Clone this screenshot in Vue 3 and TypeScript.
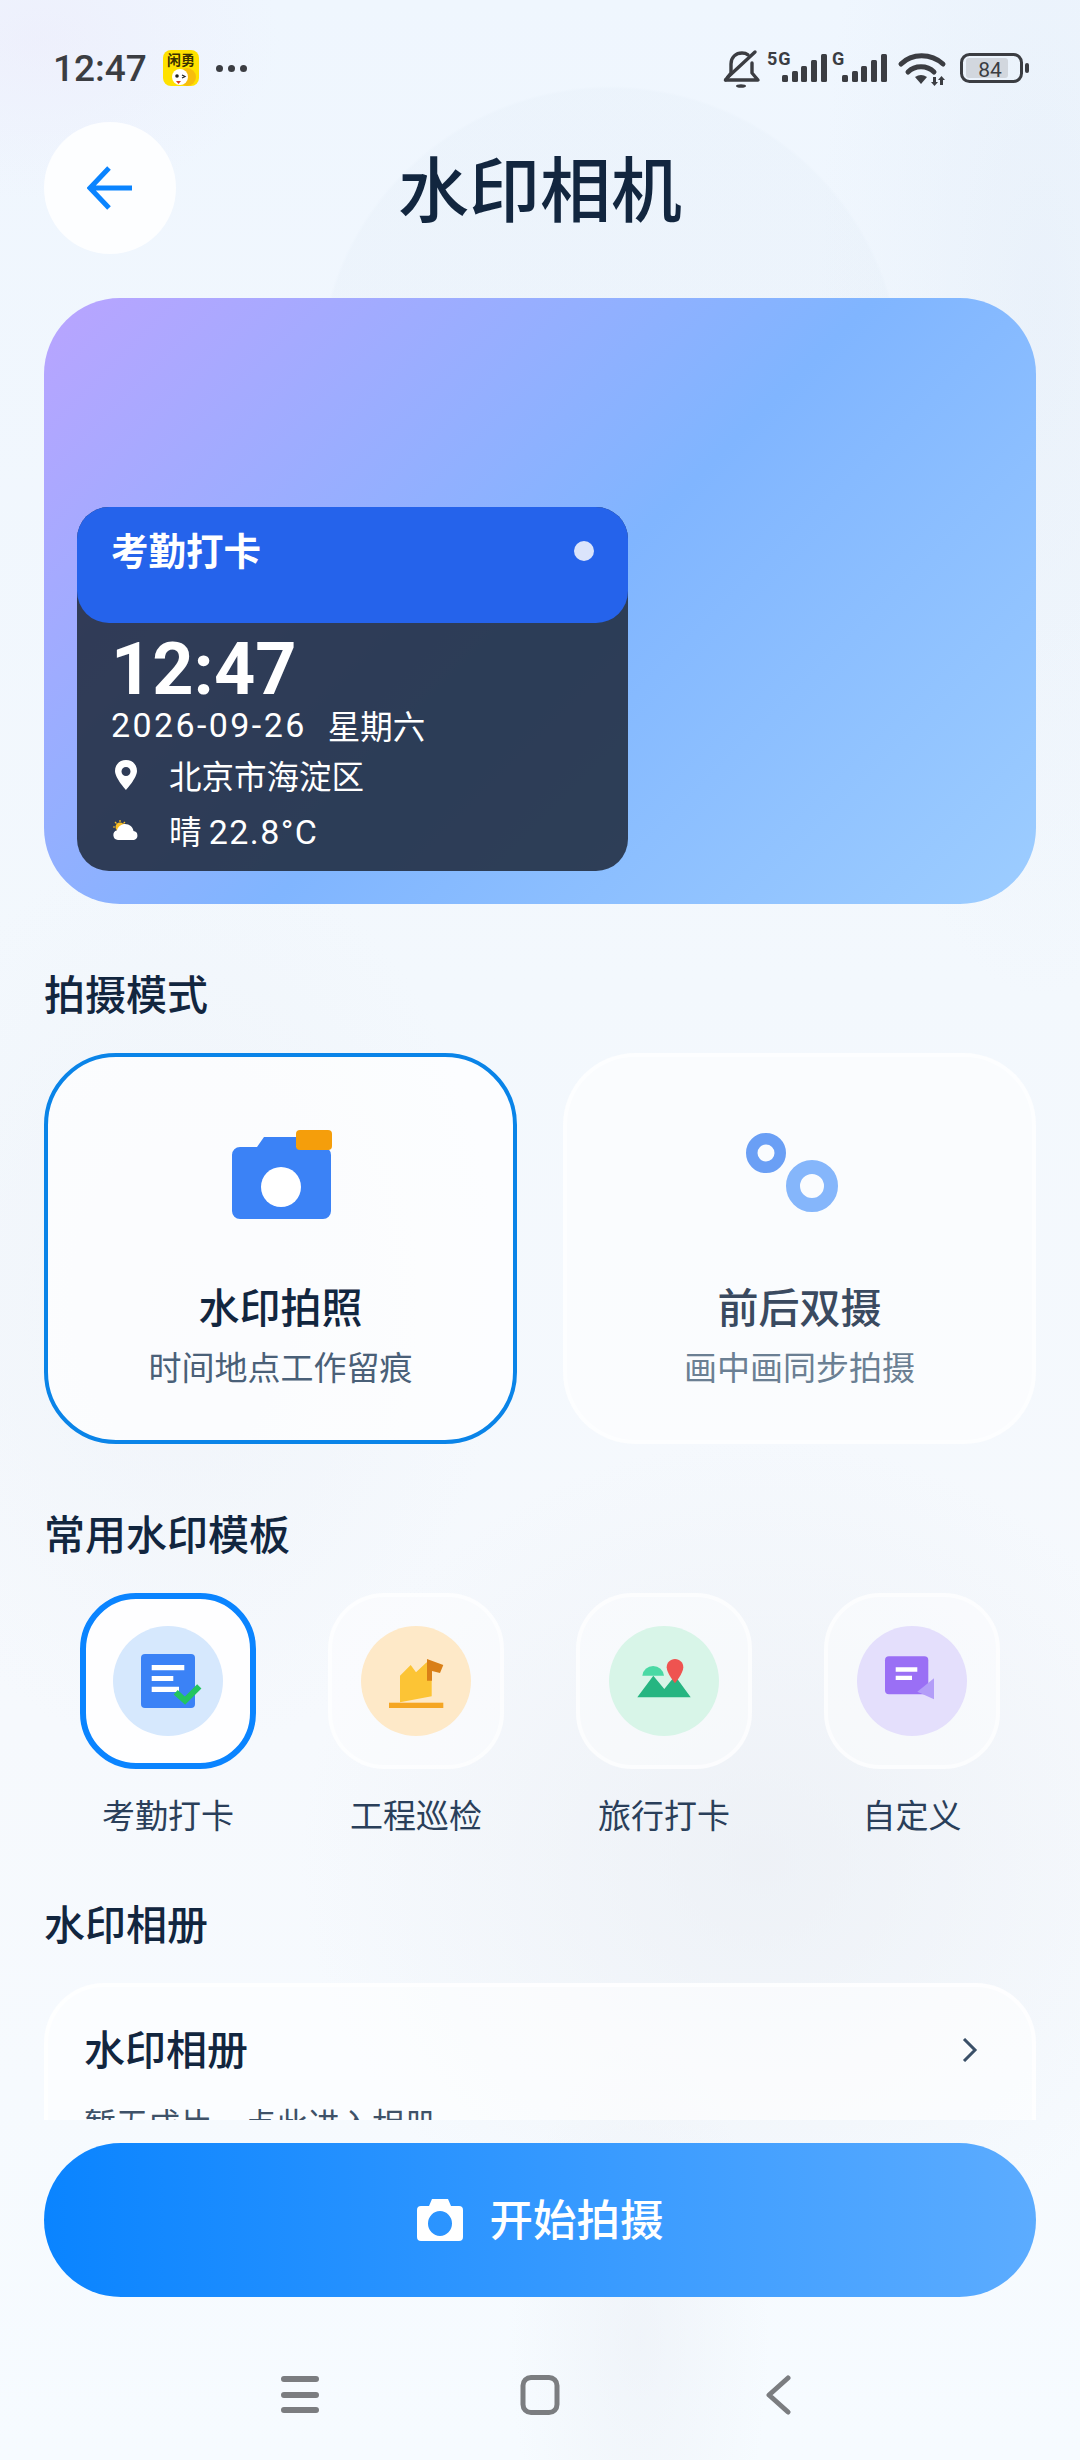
<template>
  <div class="page">
    <div class="status">
      <div class="status-left">
        <span class="clock">12:47</span>
        <svg class="app-icon" width="36" height="36" viewBox="0 0 36 36">
          <rect width="36" height="36" rx="8" fill="#ffe100" />
          <text x="18" y="15" text-anchor="middle" class="app-icon-text">闲勇</text>
          <circle cx="24" cy="27" r="9" fill="#f7bd0c" />
          <circle cx="17" cy="27" r="8" fill="#fff" />
          <circle cx="14" cy="26" r="1.8" fill="#222" />
          <path d="M19 25l3 1.5-3 1.5" fill="none" stroke="#222" stroke-width="1.2" />
          <path d="M13 31h5l-2.5 3z" fill="#d9381e" />
        </svg>
        <span class="dots"><i></i><i></i><i></i></span>
      </div>
      <svg class="status-right" width="310" height="40" viewBox="0 0 310 40" fill="#3b3d42">
        <g fill="none" stroke="#3b3d42" stroke-width="3.4" stroke-linecap="round" stroke-linejoin="round">
          <path d="M3.5 30L9 23V14C9 7 14 3 20 3c2.500 0 4.500 .6 6 1.800" />
          <path d="M30 13V23L36 30H3.500" />
          <path d="M6 27L33 2" />
        </g>
        <ellipse cx="19" cy="36" rx="5" ry="1.800" />
        <text x="45" y="15" class="net">5G</text>
        <rect v-for="b in signalBars" :key="'a' + b.x" :x="b.x" :y="b.y" width="6" :height="32 - b.y" rx="1.500" />
        <text x="110" y="15" class="net">G</text>
        <rect v-for="b in signalBars" :key="'b' + b.x" :x="b.x + 60" :y="b.y" width="6" :height="32 - b.y" rx="1.500" />
        <g fill="none" stroke="#3b3d42" stroke-width="5" stroke-linecap="round">
          <path d="M179 14C190 3 209 3 221 14" />
          <path d="M186 22C193 15 205 15 212 22" />
        </g>
        <path d="M193 27Q199 23 205 27L199 34Z" />
        <path d="M211 27h3v5h2l-3.500 4-3.500-4h2zM218 35h3v-5h2l-3.500-4-3.500 4h2z" />
        <rect x="239.500" y="4.500" width="60" height="27" rx="8" fill="none" stroke="#3b3d42" stroke-width="3" />
        <rect x="244" y="8" width="42" height="20" rx="3" fill="#d2d7de" />
        <text x="268" y="26.500" text-anchor="middle" class="batt">84</text>
        <rect x="303" y="13" width="4" height="10" rx="2" />
      </svg>
    </div>

    <header class="topbar">
      <button class="back" type="button">
        <svg width="46" height="44" viewBox="0 0 46 44" fill="none" stroke="#0a84ff" stroke-width="5">
          <path d="M45 22H4M22 2L3 22l19 20" />
        </svg>
      </button>
      <h1 class="title">水印相机</h1>
    </header>

    <main class="scroll">
      <section class="hero">
        <div class="mark">
          <div class="mark-head">
            <span class="mark-name">考勤打卡</span>
            <span class="mark-dot"></span>
          </div>
          <div class="mark-body">
            <div class="mark-time">12:47</div>
            <div class="mark-date"><span class="num">2026-09-26</span><span>星期六</span></div>
            <div class="mark-row">
              <svg class="mark-icon" width="24" height="30" viewBox="0 0 24 30">
                <path fill="#fff" fill-rule="evenodd" d="M12 0C5.400 0 1 4.800 1 11c0 7 11 19 11 19s11-12 11-19C23 4.800 18.600 0 12 0zm0 7a4.500 4.500 0 1 1 0 9 4.500 4.500 0 0 1 0-9z" />
              </svg>
              <span>北京市海淀区</span>
            </div>
            <div class="mark-row">
              <svg class="mark-icon" width="28" height="22" viewBox="0 0 28 22">
                <circle cx="8" cy="7" r="4.500" fill="#fbbf24" />
                <path d="M8 0v2M1 7h2M3 2l1.500 1.500M13 2l-1.500 1.500" stroke="#fbbf24" stroke-width="1.200" />
                <path fill="#fff" d="M6 20a5 5 0 0 1-1-9.800C6 6.500 9.500 4 13 4c4.500 0 8 3 8.500 7A4.600 4.600 0 0 1 22 20z" />
              </svg>
              <span>晴 <span class="num">22.8°C</span></span>
            </div>
          </div>
        </div>
      </section>

      <h2 class="section">拍摄模式</h2>
      <div class="modes">
        <div class="mode active">
          <svg class="mode-icon" width="120" height="120" viewBox="0 0 120 120">
            <path fill="#3b82f6" d="M19 27h17l7-10h32v10h27a8 8 0 0 1 8 8v56a8 8 0 0 1-8 8H19a8 8 0 0 1-8-8V35a8 8 0 0 1 8-8z" />
            <circle cx="60" cy="67" r="20" fill="#fff" />
            <rect x="75" y="10" width="36" height="20" rx="4" fill="#f59e0b" />
          </svg>
          <div class="mode-name">水印拍照</div>
          <div class="mode-sub">时间地点工作留痕</div>
        </div>
        <div class="mode">
          <svg class="mode-icon" width="120" height="120" viewBox="0 0 120 120" fill="none">
            <circle cx="26" cy="33" r="14.250" stroke="#6a9ff5" stroke-width="11.500" />
            <circle cx="72" cy="66" r="19" stroke="#85b6fb" stroke-width="14" />
          </svg>
          <div class="mode-name">前后双摄</div>
          <div class="mode-sub">画中画同步拍摄</div>
        </div>
      </div>

      <h2 class="section">常用水印模板</h2>
      <div class="templates">
        <div v-for="t in templates" :key="t.id" class="template">
          <div class="template-box" :class="{ active: t.id === 'attend' }">
            <svg class="template-icon" width="110" height="110" viewBox="0 0 110 110">
              <circle cx="55" cy="55" r="55" :fill="t.tint" />
              <template v-if="t.id === 'attend'">
                <rect x="28" y="28" width="54" height="54" rx="4" fill="#3b82f6" />
                <path fill="#fff" d="M38.700 39h32.600v5.300H38.700zM38.700 50h21.600v5H38.700zM38.700 60.700H66V66H38.700z" />
                <path d="M62.700 66.300L72 74.700l14.300-14.400" fill="none" stroke="#22c55e" stroke-width="6" />
              </template>
              <template v-else-if="t.id === 'site'">
                <rect x="28" y="76.700" width="54.300" height="5.300" fill="#f5a623" />
                <path fill="#fcc435" d="M39 49.700L49.700 39 55 46.300 65.700 36.300 70.700 45 70.700 70.300 39 76.300z" />
                <path fill="#d97f17" d="M66 33l16.300 6L79 47l-8-2v9.700h-5z" />
              </template>
              <template v-else-if="t.id === 'travel'">
                <path fill="#26b581" d="M28.300 71.300L44.300 49.700 55.300 63 66 49.700 81.700 71.300z" />
                <path fill="#4ad9a4" d="M33.300 49.700a10.900 10.700 0 0 1 21.700 0z" />
                <path fill="#ef5350" d="M66 33c-4.800 0-8.300 3.600-8.300 8.300 0 6 8.300 16 8.300 16s8.300-10 8.300-16C74.300 36.600 70.800 33 66 33z" />
              </template>
              <template v-else>
                <rect x="28" y="30.300" width="43.300" height="38" rx="4" fill="#9a6ff5" />
                <path fill="#fff" d="M38.700 41.300h21.600v4.400H38.700zM38.700 49.700H55V54H38.700z" />
                <path fill="#b39df8" d="M77 52.300v21l-16.700-7.600z" />
              </template>
            </svg>
          </div>
          <div class="template-name">{{ t.name }}</div>
        </div>
      </div>

      <h2 class="section">水印相册</h2>
      <div class="album">
        <div class="album-head">
          <span class="album-name">水印相册</span>
          <svg class="album-arrow" width="16" height="24" viewBox="0 0 16 24" fill="none" stroke="#3a5068" stroke-width="3">
            <path d="M2 1l11 11L2 23" />
          </svg>
        </div>
        <div class="album-sub">暂无成片，点此进入相册</div>
      </div>
    </main>

    <div class="footer">
      <button class="shoot" type="button">
        <svg width="46" height="42" viewBox="0 0 46 42">
          <path fill="#fff" fill-rule="evenodd" d="M4 7h8l3-7h16l3 7h8a4 4 0 0 1 4 4v27a4 4 0 0 1-4 4H4a4 4 0 0 1-4-4V11a4 4 0 0 1 4-4zm19 5a12 12.500 0 1 0 0 25 12 12.500 0 0 0 0-25z" />
        </svg>
        <span class="shoot-text">开始拍摄</span>
      </button>
    </div>

    <nav class="navbar">
      <svg width="40" height="40" viewBox="0 0 40 40" fill="none" stroke="#7b7d80" stroke-width="6" stroke-linecap="round">
        <path d="M4 4h32M4 20h32M4 35h32" />
      </svg>
      <svg width="40" height="40" viewBox="0 0 40 40" fill="none" stroke="#7b7d80" stroke-width="5">
        <rect x="3" y="2.500" width="34" height="35" rx="8" />
      </svg>
      <svg width="40" height="40" viewBox="0 0 40 40" fill="none" stroke="#7b7d80" stroke-width="5" stroke-linecap="round" stroke-linejoin="round">
        <path d="M28 3L9 20l19 17" />
      </svg>
    </nav>
  </div>
</template>

<script setup lang="ts">
const signalBars = [
  { x: 60, y: 25 },
  { x: 70, y: 21 },
  { x: 79, y: 16 },
  { x: 89, y: 10 },
  { x: 99, y: 4 }
]

const templates = [
  { id: 'attend', name: '考勤打卡', tint: '#d6e8fd' },
  { id: 'site', name: '工程巡检', tint: '#fee9c8' },
  { id: 'travel', name: '旅行打卡', tint: '#d8f5e8' },
  { id: 'custom', name: '自定义', tint: '#e4dffc' }
]
</script>

<style>
html,
body {
  margin: 0;
  background: #f5f9fd;
}
</style>

<style scoped>
.page {
  width: 1080px;
  height: 2460px;
  overflow: hidden;
  display: flex;
  flex-direction: column;
  font-family: "Noto Sans CJK SC", "Noto Sans", sans-serif;
  color: #12263f;
  background:
    radial-gradient(circle 292px at 610px 378px, rgba(222, 233, 244, 0.2) 0 99%, rgba(222, 233, 244, 0) 100%),
    radial-gradient(ellipse 220px 700px at 1040px 300px, rgba(214, 226, 240, 0.25), rgba(214, 226, 240, 0)),
    radial-gradient(ellipse 240px 160px at 40px 40px, rgba(236, 232, 250, 0.45), rgba(236, 232, 250, 0)),
    radial-gradient(ellipse 460px 420px at 760px 1860px, rgba(232, 236, 242, 0.6), rgba(232, 236, 242, 0)),
    radial-gradient(ellipse 320px 460px at 180px 1300px, rgba(236, 240, 246, 0.5), rgba(236, 240, 246, 0)),
    radial-gradient(ellipse 130px 300px at 640px 2340px, rgba(232, 236, 243, 0.45), rgba(232, 236, 243, 0)),
    linear-gradient(180deg, #eff6fe 0%, #f3f8fd 40%, #f6f9fd 70%, #f6fbff 100%);
}

.status {
  flex: none;
  height: 122px;
  box-sizing: border-box;
  padding: 46px 48px 0 53px;
  display: flex;
  justify-content: space-between;
  align-items: flex-start;
}

.status-left {
  height: 44px;
  display: flex;
  align-items: center;
}

.clock {
  font-family: Roboto, sans-serif;
  font-size: 37px;
  font-weight: 500;
  color: #3b3d42;
}

.app-icon {
  margin-left: 16px;
}

.app-icon-text {
  font-family: "Noto Sans CJK SC", sans-serif;
  font-size: 14px;
  font-weight: 700;
  fill: #3a3000;
}

.dots {
  margin-left: 17px;
  display: flex;
  gap: 5px;
}

.dots i {
  width: 7px;
  height: 7px;
  border-radius: 50%;
  background: #3b3d42;
}

.status-right {
  margin-top: 4px;
  overflow: visible;
}

.net {
  font-family: Roboto, sans-serif;
  font-size: 18px;
  font-weight: 700;
  letter-spacing: 1px;
}

.batt {
  font-family: Roboto, sans-serif;
  font-size: 21px;
}

.topbar {
  flex: none;
  display: grid;
  grid-template-columns: 132px 1fr 132px;
  align-items: center;
  padding: 0 44px;
  margin-bottom: 44px;
}

.back {
  width: 132px;
  height: 132px;
  border: 0;
  padding: 0;
  border-radius: 50%;
  background: rgba(255, 255, 255, 0.86);
  display: flex;
  align-items: center;
  justify-content: center;
}

.title {
  margin: 0 0 6px;
  text-align: center;
  font-size: 71px;
  line-height: 100px;
  font-weight: 500;
  color: #12263f;
}

.scroll {
  flex: 1;
  min-height: 0;
  overflow: hidden;
  padding: 0 44px;
}

.hero {
  height: 606px;
  box-sizing: border-box;
  padding: 33px;
  border-radius: 76px;
  display: flex;
  align-items: flex-end;
  background: linear-gradient(135deg, #b9a4ff 0%, #80b5ff 52%, #9dcdff 100%);
}

.mark {
  width: 551px;
  height: 364px;
  border-radius: 32px;
  overflow: hidden;
  color: #fff;
  background: rgba(30, 41, 59, 0.86);
}

.mark-head {
  height: 116px;
  box-sizing: border-box;
  padding: 15px 34px 0;
  border-radius: 0 0 32px 32px;
  background: #2563eb;
  display: flex;
  justify-content: space-between;
  align-items: flex-start;
}

.mark-name {
  font-size: 37.500px;
  line-height: 54px;
  font-weight: 700;
}

.mark-dot {
  width: 20px;
  height: 20px;
  margin: 19px 0 0;
  border-radius: 50%;
  background: #dbe4fb;
}

.mark-body {
  padding: 8px 34px 0;
}

.mark-time {
  font-family: Roboto, sans-serif;
  font-size: 72px;
  line-height: 78px;
  font-weight: 700;
}

.mark-date {
  margin: -6px 0 -5px;
  font-size: 32.500px;
  line-height: 44px;
  display: flex;
  gap: 21px;
}

.num {
  font-family: Roboto, sans-serif;
  font-size: 34px;
  letter-spacing: 2.400px;
}

.mark-row {
  margin-top: 11px;
  font-size: 32.500px;
  line-height: 44px;
  display: flex;
  align-items: center;
}

.mark-row .num {
  letter-spacing: 1.400px;
}

.mark-icon {
  width: 28px;
  margin: 0 29px 0 1px;
  flex: none;
}

.section {
  margin: 60px 0 33px;
  font-size: 41px;
  line-height: 56px;
  font-weight: 500;
  color: #12263f;
}

.modes {
  display: grid;
  grid-template-columns: 1fr 1fr;
  gap: 46px;
}

.mode {
  height: 391px;
  box-sizing: border-box;
  padding-top: 63px;
  border: 4px solid rgba(255, 255, 255, 0.55);
  border-radius: 72px;
  background: rgba(255, 255, 255, 0.55);
  display: flex;
  flex-direction: column;
  align-items: center;
}

.mode.active {
  border-color: #0a84e8;
  background: rgba(255, 255, 255, 0.7);
}

.mode-name {
  margin-top: 37px;
  font-size: 41px;
  line-height: 56px;
  font-weight: 500;
  color: #3a4a60;
}

.mode.active .mode-name {
  color: #12263f;
}

.mode-sub {
  margin-top: 11px;
  font-size: 33px;
  line-height: 44px;
  color: #6b7f93;
}

.mode.active .mode-sub {
  color: #4a6078;
}

.templates {
  margin-top: 1px;
  display: grid;
  grid-template-columns: repeat(4, 1fr);
}

.template {
  display: flex;
  flex-direction: column;
  align-items: center;
}

.template-box {
  width: 176px;
  height: 176px;
  box-sizing: border-box;
  border: 4px solid rgba(255, 255, 255, 0.6);
  border-radius: 56px;
  background: rgba(255, 255, 255, 0.42);
  display: flex;
  align-items: center;
  justify-content: center;
}

.template-box.active {
  border: 6px solid #0a84ff;
  background: rgba(255, 255, 255, 0.85);
}

.template-name {
  margin: 23px 0 -2px;
  font-size: 33px;
  line-height: 44px;
  color: #2a3f5a;
}

.album {
  height: 300px;
  box-sizing: border-box;
  margin-top: 4px;
  padding: 32px 54px 0 36px;
  border: 4px solid rgba(255, 255, 255, 0.7);
  border-radius: 60px;
  background: rgba(255, 255, 255, 0.58);
}

.album-head {
  display: flex;
  justify-content: space-between;
  align-items: center;
}

.album-name {
  font-size: 41px;
  line-height: 56px;
  font-weight: 500;
}

.album-arrow {
  margin-top: 6px;
}

.album-sub {
  margin-top: 25px;
  font-size: 32px;
  line-height: 44px;
  color: #3f5268;
}

.footer {
  flex: none;
  padding: 23px 44px 0;
}

.shoot {
  width: 100%;
  height: 154px;
  border: 0;
  padding: 0;
  border-radius: 77px;
  background: linear-gradient(90deg, #0a84ff 0%, #5cacff 100%);
  color: #fff;
  display: flex;
  align-items: center;
  justify-content: center;
  gap: 27px;
  font-family: "Noto Sans CJK SC", sans-serif;
  font-size: 43.500px;
  font-weight: 500;
}

.shoot-text {
  margin-bottom: 6px;
}

.navbar {
  flex: none;
  height: 163px;
  box-sizing: border-box;
  padding-top: 78px;
  display: flex;
  justify-content: center;
  gap: 200px;
}
</style>
